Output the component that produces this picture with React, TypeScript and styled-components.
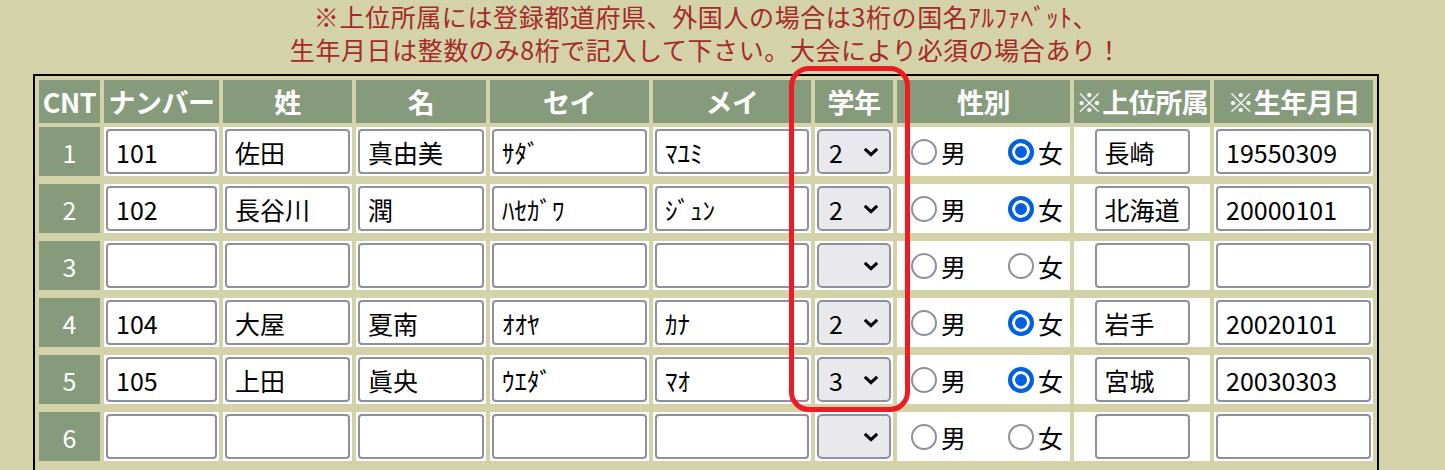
import React from 'react';
import styled, { createGlobalStyle } from 'styled-components';

const GlobalStyle = createGlobalStyle`
    body {
        margin: 0;
        background-color: #d4d2a8;
        font-family: "Noto Sans CJK JP", "Noto Sans", sans-serif;
    }
`;

const COLUMNS = '61px 115px 129px 130px 159px 158px 78px 173px 136px 159px';

interface Entry {
    no: string;
    sei: string;
    mei: string;
    seiKana: string;
    meiKana: string;
    grade: string;
    female: boolean;
    pref: string;
    birth: string;
}

const blank: Entry = { no: '', sei: '', mei: '', seiKana: '', meiKana: '', grade: '', female: false, pref: '', birth: '' };

const entries: Entry[] = [
    { no: '101', sei: '佐田', mei: '真由美', seiKana: 'ｻﾀﾞ', meiKana: 'ﾏﾕﾐ', grade: '2', female: true, pref: '長崎', birth: '19550309' },
    { no: '102', sei: '長谷川', mei: '潤', seiKana: 'ﾊｾｶﾞﾜ', meiKana: 'ｼﾞｭﾝ', grade: '2', female: true, pref: '北海道', birth: '20000101' },
    blank,
    { no: '104', sei: '大屋', mei: '夏南', seiKana: 'ｵｵﾔ', meiKana: 'ｶﾅ', grade: '2', female: true, pref: '岩手', birth: '20020101' },
    { no: '105', sei: '上田', mei: '眞央', seiKana: 'ｳｴﾀﾞ', meiKana: 'ﾏｵ', grade: '3', female: true, pref: '宮城', birth: '20030303' },
    blank,
];

const headers = ['CNT', 'ナンバー', '姓', '名', 'セイ', 'メイ', '学年', '性別', '※上位所属', '※生年月日'];

const Page = styled.div`
    position: relative;
    width: 1346px;
    padding-left: 33px;
`;

const Notice = styled.p`
    margin: 0 0 8px;
    text-align: center;
    color: #a52a2a;
    font-size: 25px;
    line-height: 33px;
    letter-spacing: 0.6px;
`;

const Frame = styled.div`
    border: 2px solid #000;
    border-bottom: none;
    padding: 4px 4px 12px;
    display: flex;
    flex-direction: column;
    gap: 8px;
`;

const HeaderRow = styled.div`
    display: grid;
    grid-template-columns: ${COLUMNS};
    column-gap: 4px;
    margin-bottom: -4px;
`;

const HeadCell = styled.div`
    height: 43px;
    background-color: #869b7c;
    color: #fff;
    font-size: 27px;
    font-weight: bold;
    display: flex;
    align-items: center;
    justify-content: center;
    white-space: nowrap;
    letter-spacing: -0.5px;
`;

const Row = styled.div`
    display: grid;
    grid-template-columns: ${COLUMNS};
    column-gap: 4px;
    height: 49px;
`;

const NumCell = styled.div`
    background-color: #869b7c;
    color: #fff;
    font-size: 25px;
    display: flex;
    align-items: center;
    justify-content: center;
`;

const Cell = styled.div<{ $center?: boolean }>`
    background-color: #fff;
    display: flex;
    align-items: center;
    justify-content: ${(p) => (p.$center ? 'center' : 'stretch')};
    padding: 0 2px;
`;

const TextInput = styled.input<{ $width?: number }>`
    box-sizing: border-box;
    width: ${(p) => (p.$width ? `${p.$width}px` : '100%')};
    height: 45px;
    border: 2px solid #8f8f9d;
    border-radius: 4px;
    padding: 0 0 0 8px;
    font-family: inherit;
    font-size: 25px;
    color: #000;
    background: #fff;
    outline: none;
`;

const SelectWrap = styled.div`
    position: relative;
    width: 100%;
    height: 45px;
`;

const GradeSelect = styled.select`
    appearance: none;
    box-sizing: border-box;
    width: 100%;
    height: 100%;
    border: 2px solid #8f8f9d;
    border-radius: 5px;
    background: #e9e9ed;
    padding: 0 0 0 10px;
    font-family: inherit;
    font-size: 25px;
    color: #000;
`;

const Chevron = styled.svg`
    position: absolute;
    right: 12px;
    top: 18px;
    pointer-events: none;
`;

const GenderCell = styled.div`
    background-color: #fff;
    display: flex;
    align-items: center;
    padding-left: 14px;
    font-size: 25px;
`;

const Choice = styled.label`
    display: flex;
    align-items: center;
    gap: 4px;
    & + & {
        margin-left: 42px;
    }
`;

const Radio = styled.input`
    appearance: none;
    box-sizing: border-box;
    margin: 0;
    width: 26px;
    height: 26px;
    border-radius: 50%;
    border: 2px solid #8f8f9d;
    background: #fff;

    &:checked {
        border: 4px solid #0060df;
        background: #0060df;
        box-shadow: inset 0 0 0 3px #fff;
    }
`;

const Highlight = styled.div`
    position: absolute;
    left: 789px;
    top: 66px;
    width: 121px;
    height: 346px;
    box-sizing: border-box;
    border: 5px solid #ed1c24;
    border-radius: 20px;
    pointer-events: none;
`;

export default function App(): JSX.Element {
    return (
        <Page>
            <GlobalStyle />
            <Notice>
                ※上位所属には登録都道府県、外国人の場合は3桁の国名ｱﾙﾌｧﾍﾞｯﾄ、<br />
                生年月日は整数のみ8桁で記入して下さい。大会により必須の場合あり！
            </Notice>
            <Frame>
                <HeaderRow>
                    {headers.map((h) => (
                        <HeadCell key={h}>{h}</HeadCell>
                    ))}
                </HeaderRow>
                {entries.map((e, i) => (
                    <Row key={i}>
                        <NumCell>{i + 1}</NumCell>
                        <Cell><TextInput defaultValue={e.no} /></Cell>
                        <Cell><TextInput defaultValue={e.sei} /></Cell>
                        <Cell><TextInput defaultValue={e.mei} /></Cell>
                        <Cell><TextInput defaultValue={e.seiKana} /></Cell>
                        <Cell><TextInput defaultValue={e.meiKana} /></Cell>
                        <Cell>
                            <SelectWrap>
                                <GradeSelect defaultValue={e.grade}>
                                    <option value=""></option>
                                    <option value="1">1</option>
                                    <option value="2">2</option>
                                    <option value="3">3</option>
                                </GradeSelect>
                                <Chevron width="16" height="10" viewBox="0 0 16 10">
                                    <path d="M1.8 1.8 L8 7.6 L14.2 1.8" fill="none" stroke="#000" strokeWidth="3" />
                                </Chevron>
                            </SelectWrap>
                        </Cell>
                        <GenderCell>
                            <Choice>
                                <Radio type="radio" name={`sex${i}`} defaultChecked={false} />男
                            </Choice>
                            <Choice>
                                <Radio type="radio" name={`sex${i}`} defaultChecked={e.female} />女
                            </Choice>
                        </GenderCell>
                        <Cell $center><TextInput $width={95} defaultValue={e.pref} /></Cell>
                        <Cell><TextInput defaultValue={e.birth} /></Cell>
                    </Row>
                ))}
            </Frame>
            <Highlight />
        </Page>
    );
}
